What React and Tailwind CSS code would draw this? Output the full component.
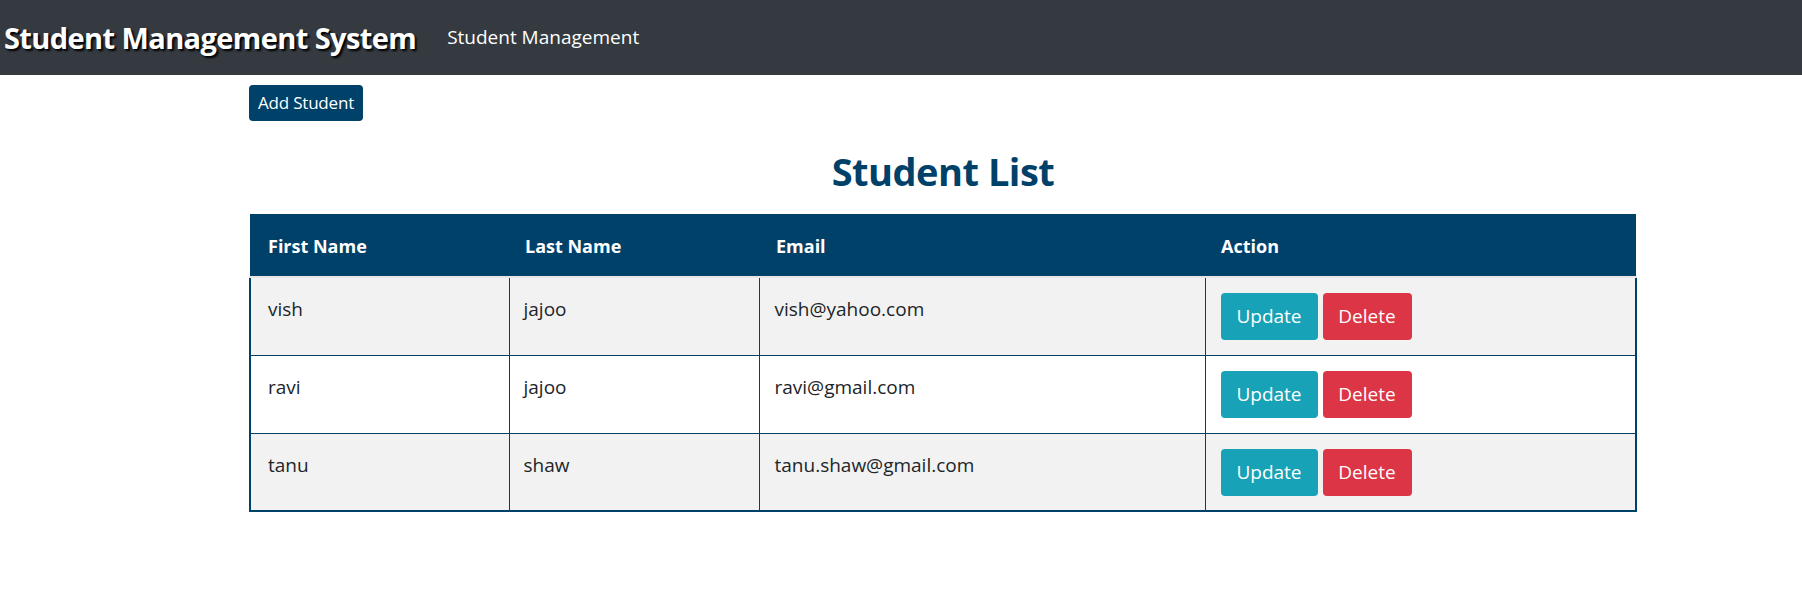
import React from "react";

const students = [
  { id: 1, firstName: "vish", lastName: "jajoo", email: "vish@yahoo.com" },
  { id: 2, firstName: "ravi", lastName: "jajoo", email: "ravi@gmail.com" },
  { id: 3, firstName: "tanu", lastName: "shaw", email: "tanu.shaw@gmail.com" },
];

export default function App() {
  return (
    <div className="min-h-screen bg-white text-[#212529] font-['Open_Sans',sans-serif]">
      {/* Navbar */}
      <nav className="h-[75px] bg-[#343a40] flex items-center">
        <a className="pl-[4px] text-[29px] font-bold text-white tracking-[-0.6px] [text-shadow:2px_2px_2px_#000]">
          Student Management System
        </a>
        <a className="ml-[31px] text-[19px] text-white">Student Management</a>
      </nav>

      <div className="ml-[249px] w-[1388px]">
        <button className="mt-[10px] h-[36px] px-[9px] rounded-[4px] bg-[#00416a] text-white text-[17px] tracking-[-0.2px]">
          Add Student
        </button>

        <h2 className="mt-[22px] text-center text-[38px] font-bold text-[#00416a] tracking-[-0.5px] leading-[56px]">
          Student List
        </h2>

        {/* Table */}
        <table className="mt-[15px] w-full border-collapse text-[19px]">
          <thead>
            <tr className="bg-[#00416a] text-white text-left border-b-2 border-[#e6e6e6] text-[18px]">
              <th className="w-[259px] h-[63px] pl-[18px] pt-[3px] font-bold">First Name</th>
              <th className="w-[250px] pl-[16px] pt-[3px] font-bold">Last Name</th>
              <th className="w-[446px] pl-[17px] pt-[3px] font-bold">Email</th>
              <th className="pl-[16px] pt-[3px] font-bold">Action</th>
            </tr>
          </thead>
          <tbody className="border-2 border-t-0 border-[#00416a]">
            {students.map((s, i) => (
              <tr
                key={s.id}
                className={`${i % 2 === 0 ? "bg-[#f2f2f2]" : "bg-white"} border-b border-[#00416a] align-top`}
              >
                <td className="h-[78px] pl-[17px] pt-[17px] border-r border-[#00416a]">{s.firstName}</td>
                <td className="pl-[14px] pt-[17px] border-r border-[#00416a]">{s.lastName}</td>
                <td className="pl-[15px] pt-[17px] border-r border-[#00416a]">{s.email}</td>
                <td className="pl-[15px] pt-[15px]">
                  <div className="flex gap-[5px]">
                    <button className="h-[47px] w-[97px] rounded-[4px] bg-[#17a2b8] text-white text-[19px]">
                      Update
                    </button>
                    <button className="h-[47px] w-[89px] rounded-[4px] bg-[#dc3545] text-white text-[19px]">
                      Delete
                    </button>
                  </div>
                </td>
              </tr>
            ))}
          </tbody>
        </table>
      </div>
    </div>
  );
}
